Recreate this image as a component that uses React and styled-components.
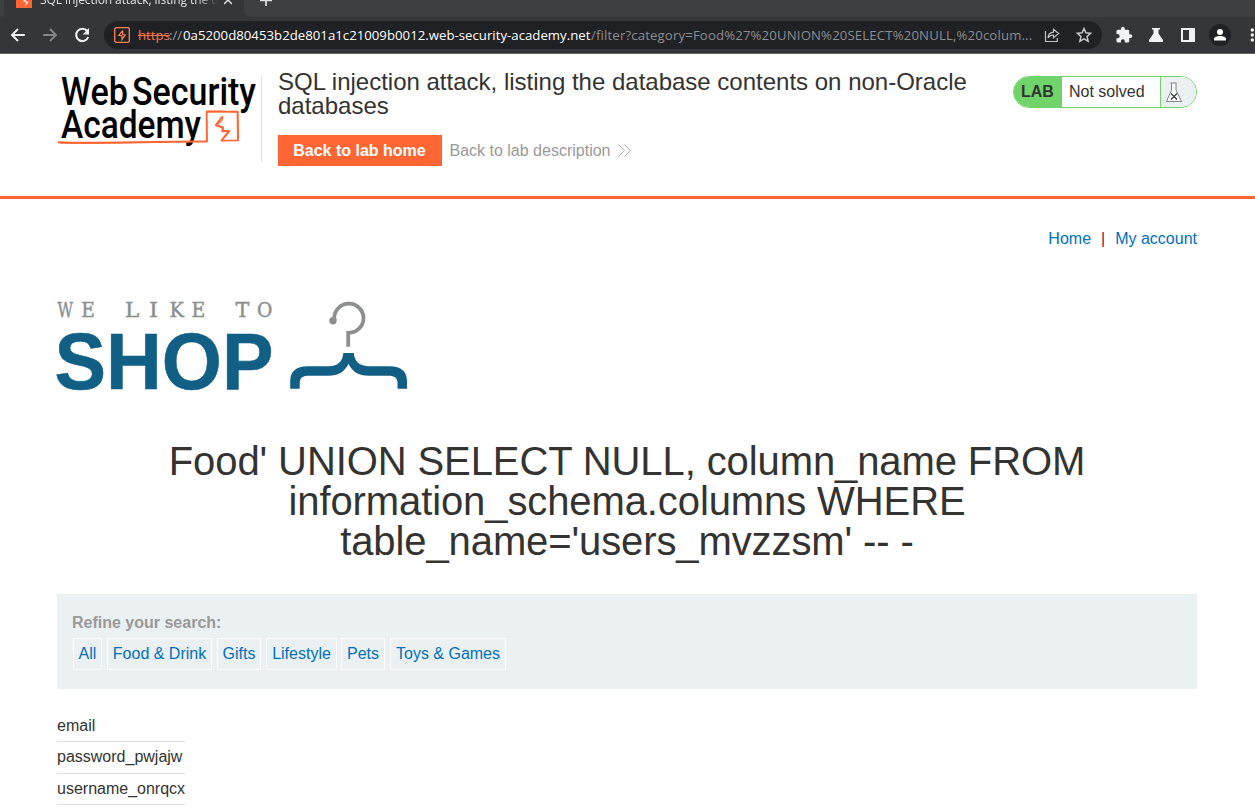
import React from "react";
import styled, { createGlobalStyle } from "styled-components";

const GlobalStyle = createGlobalStyle`
  *, *::before, *::after { box-sizing: border-box; }
  html, body { margin: 0; background: #fff; }
  body {
    height: 811px;
    overflow: hidden;
    font-family: "Liberation Sans", Arial, sans-serif;
    font-size: 16px;
    color: #333332;
  }
  a { text-decoration: none; color: inherit; }
  svg { display: block; flex: none; }
`;

/* Browser chrome */

const Chrome = styled.header`
  height: 54px;
  background: #35363a;
  border-bottom: 1px solid #646568;
  font-family: "Open Sans", "Noto Sans", sans-serif;
`;

const TabStrip = styled.div`
  display: flex;
  height: 17px;
  background: #35363a;
`;

const StripEdge = styled.div`
  width: 4px;
  background: #3c4043;
  border-bottom-right-radius: 8px;
`;

const Tab = styled.div`
  display: flex;
  width: 240px;
  height: 17px;
  padding-left: 12px;
  overflow: hidden;
`;

const TabTitle = styled.span`
  width: 178px;
  margin: -9px 6px 0 8px;
  font-size: 12px;
  line-height: 18px;
  letter-spacing: -0.08px;
  white-space: nowrap;
  overflow: hidden;
  color: #dfe1e5;
  mask-image: linear-gradient(90deg, #000 88%, transparent 100%);
`;

const StripRest = styled.div`
  flex: 1;
  padding-left: 16px;
  background: #3c4043;
  border-bottom-left-radius: 8px;
`;

const Toolbar = styled.div`
  display: flex;
  align-items: center;
  height: 36px;
  padding-left: 9px;
  overflow: hidden;
`;

const NavIcons = styled.div`
  display: flex;
  flex: none;
  gap: 14px;
  width: 95px;
`;

const AddressBar = styled.div`
  display: flex;
  flex: none;
  align-items: center;
  width: 998px;
  height: 28px;
  padding-left: 10px;
  border-radius: 14px;
  background: #202124;
`;

const Url = styled.div`
  display: flex;
  width: 898px;
  margin-left: 8px;
  font-size: 13.2px;
  line-height: 20px;
  white-space: pre;
`;

const UrlPart = styled.span`
  flex: none;
  width: ${(p) => p.$width}px;
  color: ${(p) => p.$color};
  letter-spacing: ${(p) => p.$spacing || 0}px;
  text-decoration: ${(p) => (p.$strike ? "line-through" : "none")};
`;

const AddressActions = styled.div`
  display: flex;
  gap: 14px;
  margin-left: 7px;
`;

const Extensions = styled.div`
  display: flex;
  flex: none;
  align-items: center;
  gap: 14px;
  margin-left: 13px;
`;

const Avatar = styled.div`
  display: grid;
  place-items: center;
  width: 22px;
  height: 22px;
  margin: 0 -2px;
  border-radius: 50%;
  background: #202124;
`;

/* Lab banner */

const Banner = styled.section`
  height: 145px;
  border-bottom: 3px solid #ff6633;
`;

const Container = styled.div`
  width: 1140px;
  margin-left: 57px;
`;

const BannerRow = styled(Container)`
  display: flex;
  align-items: flex-start;
`;

const LogoBox = styled.div`
  width: 205px;
  height: 86px;
  margin-top: 22px;
  border-right: 1px solid #e3e3e3;

  svg { overflow: visible; }
`;

const TitleBox = styled.div`
  width: 735px;
  padding: 16px 0 0 16px;
`;

const LabTitle = styled.h2`
  margin: 0 0 17px;
  font-size: 24px;
  font-weight: 400;
  line-height: 24px;
`;

const LabLinks = styled.div`
  display: flex;
  align-items: center;
  height: 31px;
`;

const HomeButton = styled.a`
  width: 164px;
  height: 31px;
  padding-right: 1px;
  background: #ff6633;
  color: #fff;
  font-weight: 700;
  line-height: 31px;
  text-align: center;
`;

const DescriptionLink = styled.a`
  display: flex;
  align-items: center;
  gap: 8px;
  margin-left: 7.5px;
  color: #999;
  line-height: 31px;
`;

const Status = styled.div`
  display: flex;
  width: 184px;
  height: 32px;
  margin: 22px 0 0 16px;
  overflow: hidden;
  border: 1px solid #70d46b;
  border-radius: 16px;
  line-height: 30px;
`;

const StatusTag = styled.strong`
  width: 48px;
  padding-left: 7px;
  background: #70d46b;
`;

const StatusText = styled.span`
  width: 99px;
  padding-left: 7px;
  border-right: 1px solid #70d46b;
`;

const StatusFlask = styled.span`
  flex: 1;
  padding: 5px 0 0 4px;
  background: #ebf0f2;
`;

/* Shop page */

const TopLinks = styled.nav`
  display: flex;
  justify-content: flex-end;
  gap: 10px;
  margin-top: 31px;
  color: #0070bb;
  line-height: 18px;
`;

const Divider = styled.span`
  color: #8a0f45;
`;

const ShopLogo = styled.div`
  height: 100px;
  margin-top: 47px;

  svg { overflow: visible; }
`;

const Heading = styled.h1`
  margin: 46px 0 33px;
  font-size: 40px;
  font-weight: 400;
  line-height: 40px;
  letter-spacing: -0.1px;
  text-align: center;
`;

const Filters = styled.section`
  height: 95px;
  padding: 20px 16px 0 15px;
  background: #ebf0f2;
`;

const FilterLabel = styled.div`
  color: #999;
  font-weight: 700;
  line-height: 18px;
`;

const FilterList = styled.div`
  display: flex;
  gap: 5px;
  margin: 6px 0 0 1px;
`;

const FilterLink = styled.a`
  width: ${(p) => p.$width}px;
  height: 32px;
  border: 1px solid #fff;
  color: #0070bb;
  line-height: 29px;
  text-align: center;
  white-space: nowrap;

  &:nth-child(5) { margin-left: -1px; }
`;

const Results = styled.div`
  width: 128px;
  margin-top: 21px;
`;

const ResultRow = styled.div`
  height: ${(p) => p.$height}px;
  border-bottom: 1px solid #dfdfdf;
  line-height: 29px;

  &:first-child { line-height: 31px; }
`;

const Bolt = () => (
  <svg width="16" height="16" viewBox="0 0 16 16" fill="none" stroke="#ff8552">
    <rect x=".7" y=".7" width="14.6" height="14.6" rx="1.6" strokeWidth="1.300" />
    <path d="M8.700 3.500 4.800 8.400l3.300.5M8.700 3.500v4l2.500.4-3.200 4.600.1-3.600" strokeWidth="1.200" />
  </svg>
);

const AcademyLogo = () => (
  <svg width="204" height="86" viewBox="57 76 204 86" fontFamily="Roboto, sans-serif" fontSize="38" fontWeight="500">
    <g fill="#000">
      <text x="61" y="105" textLength="67" lengthAdjust="spacingAndGlyphs">Web</text>
      <text x="132" y="105" textLength="124" lengthAdjust="spacingAndGlyphs">Security</text>
      <text x="61" y="137.5" textLength="140" lengthAdjust="spacingAndGlyphs">Academy</text>
    </g>
    <g fill="none" stroke="#ff6633" strokeWidth="1.9" strokeLinejoin="round">
      <path d="M58 142.200c35 1.800 87-.8 149-.7l-.4-29.600c11-.6 20-.2 31-.3l.3 28.800-16.400.2 7.800-9.500-7.100.2.600-3.600-7-2.300 6.200-8.700" />
      <path d="M60 142.800c30 1 70-.5 110-.7M206.800 111.200l30.800.8.8 28.500" strokeWidth="1.300" />
      <path d="m222.800 116-.6 4-5.200 5 6.400 2.200-.6 3.600h6l-7 9" strokeWidth="1.100" />
    </g>
  </svg>
);

const SLAB_LETTERS = [
  ["W", 57.5, 15.5], ["E", 81.2, 13.6], [" "], ["L", 125, 14.2], ["I", 149, 9],
  ["K", 169.5, 14.5], ["E", 191.5, 13.8], [" "], ["T", 235.4, 13.8], ["O", 257, 15.4],
];

const HangerLogo = () => (
  <svg width="360" height="100" viewBox="57 295 360 100">
    <text y="317.3" fill="#8d8f8f" stroke="#8d8f8f" strokeWidth=".45" fontFamily="'DejaVu Serif', serif" fontSize="20">
      {SLAB_LETTERS.map(([letter, x, length], i) =>
        x ? <tspan key={i} x={x} textLength={length} lengthAdjust="spacingAndGlyphs">{letter}</tspan> : letter
      )}
    </text>
    <text x="54.5" y="388.7" fill="#115f85" stroke="#115f85" strokeWidth=".6" fontFamily="'Liberation Sans', sans-serif" fontWeight="700" fontSize="80.500" textLength="219" lengthAdjust="spacingAndGlyphs">SHOP</text>
    <path d="M334.400 320A14.600 14.600 0 1 1 348.200 332.800V346.700" fill="none" stroke="#8d8f8f" strokeWidth="3.800" />
    <circle cx="333" cy="320.800" r="3.700" fill="#8d8f8f" />
    <path d="M343.300 353h10.500c.5 8 5.200 12.700 14.200 13.200h21.500c12 0 17.500 5.300 17.500 15.300v7.200h-9.500v-5.200c0-5.500-3-7.700-9-7.700h-20c-10 0-16.500-4.300-20-12-3.500 7.700-10 12-20 12h-20c-6 0-8.800 2.200-8.800 7.700v5.200h-9.500v-7.200c0-10 5.500-15.300 17.500-15.300h21.400c9 0 13.700-5.200 14.200-13.200z" fill="#115f85" />
  </svg>
);

const FILTERS = [
  ["All", 29], ["Food & Drink", 105], ["Gifts", 44],
  ["Lifestyle", 71], ["Pets", 44], ["Toys & Games", 116],
];

const BrowserChrome = () => (
  <Chrome>
    <TabStrip>
      <StripEdge />
      <Tab>
        <svg width="16" height="8" viewBox="0 8 16 8">
          <rect width="16" height="16" fill="#ff6633" />
          <path d="M10 7.500 6.500 9l4 1.500-2 4.500 4-5-3-.7z" fill="#fff" />
        </svg>
        <TabTitle>SQL injection attack, listing the database contents</TabTitle>
        <svg width="8" height="8" viewBox="0 0 8 8"><path d="m0-4 8 8M8-4 0 4" stroke="#dfe1e5" strokeWidth="1.500" /></svg>
      </Tab>
      <StripRest>
        <svg width="12" height="8" viewBox="0 0 12 8"><path d="M6 0v6M0 .5h12" stroke="#dfe1e5" strokeWidth="1.700" /></svg>
      </StripRest>
    </TabStrip>
    <Toolbar>
      <NavIcons>
        {[["#f1f3f4", "M15.800 9H3m6-6L3 9l6 6"], ["#85868a", "M2.200 9H15M9 3l6 6-6 6"]].map(([c, d]) => (
          <svg key={c} width="18" height="18" viewBox="0 0 18 18" fill="none" stroke={c} strokeWidth="1.900"><path d={d} /></svg>
        ))}
        <svg width="18" height="18" viewBox="0 0 18 18" fill="none">
          <path d="M14.200 5A6.200 6.200 0 1 0 15.200 11" stroke="#f1f3f4" strokeWidth="2.100" />
          <path d="M16 2v6.400H9.600z" fill="#f1f3f4" />
        </svg>
      </NavIcons>
      <AddressBar>
        <Bolt />
        <Url>
          <UrlPart $width={31} $color="#f6774b" $strike>https</UrlPart>
          <UrlPart $width={14} $color="#9aa0a6">://</UrlPart>
          <UrlPart $width={408} $color="#fff" $spacing={0.02}>0a5200d80453b2de801a1c21009b0012.web-security-academy.net</UrlPart>
          <UrlPart $width={442} $color="#8b8e92" $spacing={0.14}>/filter?category=Food%27%20UNION%20SELECT%20NULL,%20colum...</UrlPart>
        </Url>
        <AddressActions>
          <svg width="18" height="18" viewBox="0 0 18 18" fill="none" stroke="#bdc1c6" strokeWidth="1.200">
            <path d="M2.500 5v10.500h11.800V12M5 12c.3-4 2.500-5.600 5.500-5.800V3.300L15.700 7.500l-5.200 4.200V9c-2.500 0-4 .7-5.500 3z" />
          </svg>
          <svg width="18" height="18" viewBox="0 0 18 18" fill="none" stroke="#c7cacd" strokeWidth="1.500">
            <path d="m9 2.500 1.900 4.300 4.700.5-3.500 3.200 1 4.700L9 12.800l-4.100 2.400 1-4.700-3.500-3.200 4.700-.5z" />
          </svg>
        </AddressActions>
      </AddressBar>
      <Extensions>
        <svg width="18" height="18" viewBox="0 0 24 24" fill="#f1f3f4">
          <path d="M20.500 11H19V7a2 2 0 0 0-2-2h-4V3.500a2.500 2.500 0 0 0-5 0V5H4a2 2 0 0 0-2 2v3.800h1.500a2.700 2.700 0 0 1 0 5.400H2V20a2 2 0 0 0 2 2h3.800v-1.500a2.700 2.700 0 0 1 5.400 0V22H17a2 2 0 0 0 2-2v-4h1.500a2.500 2.500 0 0 0 0-5z" />
        </svg>
        <svg width="18" height="18" viewBox="0 0 18 18" fill="#f1f3f4"><path d="M5 2h8v1.500h-1.500v4L16 14v2H2v-2l4.500-6.500v-4H5z" /></svg>
        <svg width="18" height="18" viewBox="0 0 18 18"><path d="M2 2h14v14H2zm2 2v10h6V4z" fill="#f1f3f4" fillRule="evenodd" /></svg>
        <Avatar>
          <svg width="14" height="14" viewBox="0 0 14 14" fill="#fff"><circle cx="7" cy="4" r="3" /><path d="M1 12.500V11c0-4 12-4 12 0v1.500z" /></svg>
        </Avatar>
        <svg width="18" height="18" viewBox="0 0 18 18" fill="#f1f3f4"><circle cx="9.300" cy="4" r="1.700" /><circle cx="9.300" cy="9" r="1.700" /><circle cx="9.300" cy="14" r="1.700" /></svg>
      </Extensions>
    </Toolbar>
  </Chrome>
);

export default function App() {
  return (
    <>
      <GlobalStyle />
      <BrowserChrome />
      <Banner>
        <BannerRow>
          <LogoBox><AcademyLogo /></LogoBox>
          <TitleBox>
            <LabTitle>SQL injection attack, listing the database contents on non-Oracle databases</LabTitle>
            <LabLinks>
              <HomeButton href="#">Back to lab home</HomeButton>
              <DescriptionLink href="#">
                Back to lab description
                <svg width="13" height="13" viewBox="0 0 13 13" fill="none" stroke="#a6a6a6"><path d="m.5.500 6 6-6 6m6-12 6 6-6 6" /></svg>
              </DescriptionLink>
            </LabLinks>
          </TitleBox>
          <Status>
            <StatusTag>LAB</StatusTag>
            <StatusText>Not solved</StatusText>
            <StatusFlask>
              <svg width="18" height="21" viewBox="0 0 18 21" fill="none" stroke="#777" strokeWidth=".9">
                <path d="M5.500 1h6M6.500 1v7L1.500 19.500h15L11 8V1" fill="#fafbfb" />
                <path d="m6 11.500 6 6m0-6-6 6" stroke="#333" strokeWidth="1.100" />
              </svg>
            </StatusFlask>
          </Status>
        </BannerRow>
      </Banner>
      <Container>
        <TopLinks>
          <a href="#">Home</a>
          <Divider>|</Divider>
          <a href="#">My account</a>
        </TopLinks>
        <ShopLogo><HangerLogo /></ShopLogo>
        <Heading>
          Food' UNION SELECT NULL, column_name FROM<br />
          information_schema.columns WHERE<br />
          table_name='users_mvzzsm' -- -
        </Heading>
        <Filters>
          <FilterLabel>Refine your search:</FilterLabel>
          <FilterList>
            {FILTERS.map(([name, width]) => (
              <FilterLink key={name} href="#" $width={width}>{name}</FilterLink>
            ))}
          </FilterList>
        </Filters>
        <Results>
          <ResultRow $height={32}>email</ResultRow>
          <ResultRow $height={32}>password_pwjajw</ResultRow>
          <ResultRow $height={31}>username_onrqcx</ResultRow>
        </Results>
      </Container>
    </>
  );
}
